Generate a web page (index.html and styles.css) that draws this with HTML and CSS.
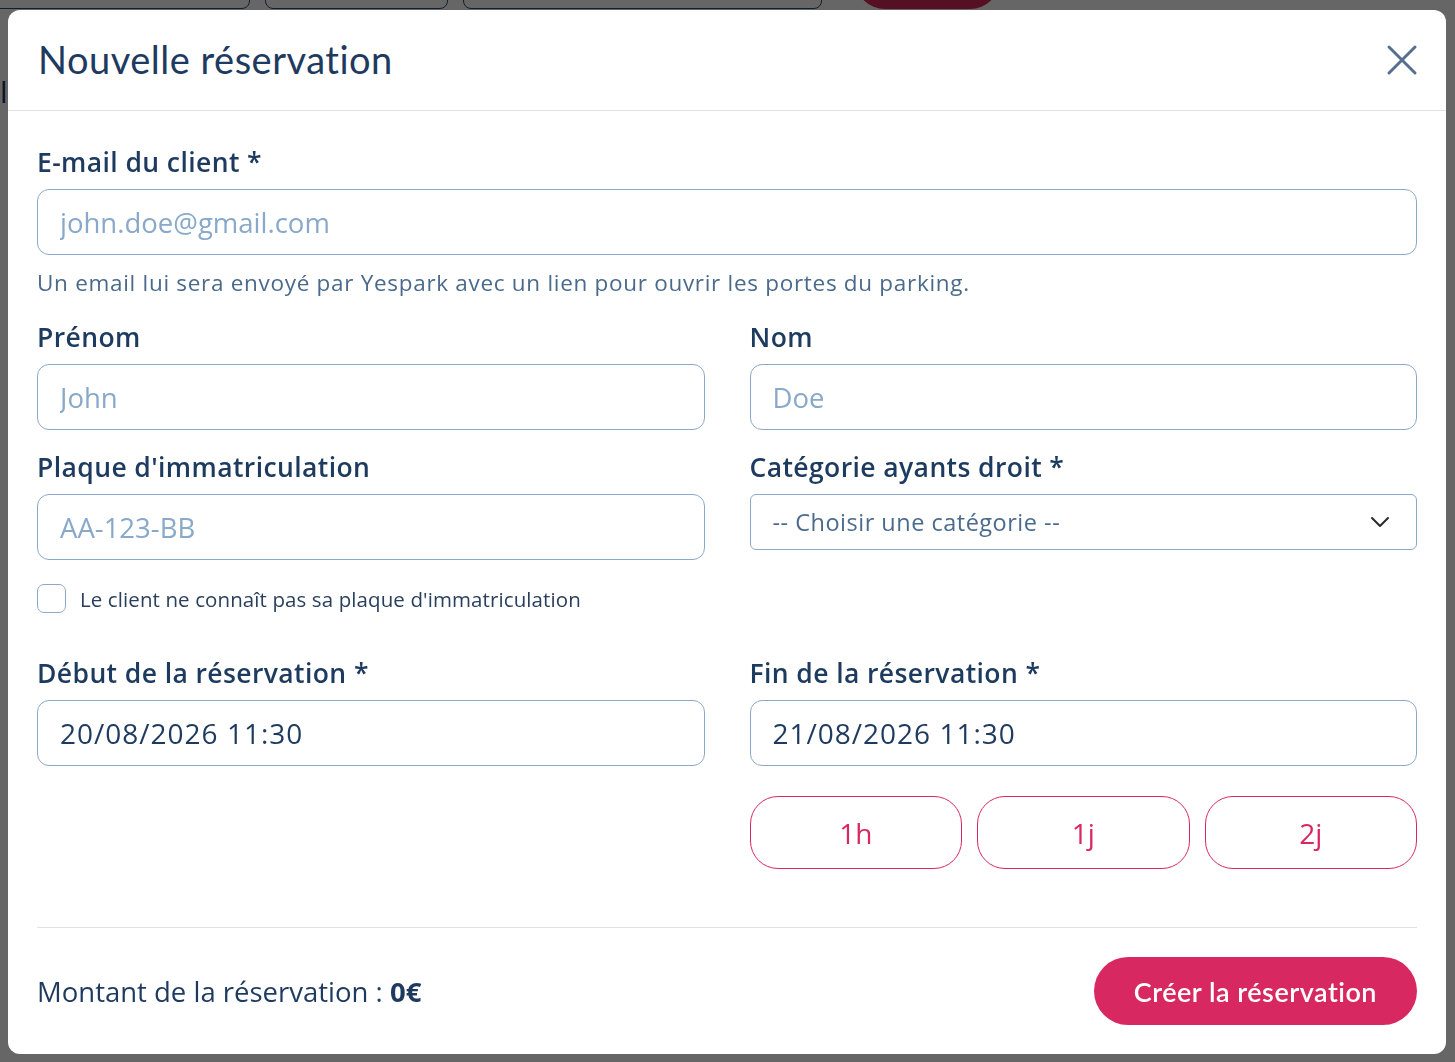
FILE: index.html
```html
<!DOCTYPE html>
<html lang="fr">
  <head>
    <meta charset="UTF-8">
    <title>Nouvelle réservation</title>
    <link rel="stylesheet" href="styles.css">
  </head>
  <body>
    <!-- page behind the dialog -->
    <div class="page">
      <div class="page-cards">
        <div class="page-card card-a"></div>
        <div class="page-card card-b"></div>
        <div class="page-card card-c"></div>
        <div class="page-btn"></div>
      </div>
      <div class="page-text">l</div>
    </div>

    <div class="overlay">
      <div class="modal">
        <div class="modal-header">
          <h2 class="modal-title">Nouvelle réservation</h2>
          <button class="close" type="button" aria-label="Fermer">
            <svg width="32" height="32" viewBox="0 0 32 32" fill="none" stroke="#55708f" stroke-width="3" stroke-linecap="round">
              <path d="M3 3 L29 29 M29 3 L3 29"/>
            </svg>
          </button>
        </div>

        <form class="modal-body" onsubmit="return false;">
          <div class="field">
            <label class="field-label" for="email">E-mail du client *</label>
            <input type="text" id="email" class="input" placeholder="john.doe@gmail.com">
            <p class="help">Un email lui sera envoyé par Yespark avec un lien pour ouvrir les portes du parking.</p>
          </div>

          <div class="row row-names">
            <div class="field">
              <label class="field-label" for="firstname">Prénom</label>
              <input type="text" id="firstname" class="input" placeholder="John">
            </div>
            <div class="field">
              <label class="field-label" for="lastname">Nom</label>
              <input type="text" id="lastname" class="input" placeholder="Doe">
            </div>
          </div>

          <div class="row row-plate">
            <div class="field">
              <label class="field-label" for="plate">Plaque d'immatriculation</label>
              <input type="text" id="plate" class="input" placeholder="AA-123-BB">
              <label class="check">
                <input type="checkbox">
                <span class="box"></span>
                <span class="check-text">Le client ne connaît pas sa plaque d'immatriculation</span>
              </label>
            </div>
            <div class="field">
              <label class="field-label" for="category">Catégorie ayants droit *</label>
              <div class="select" id="category">
                <span>-- Choisir une catégorie --</span>
                <svg width="20" height="12" viewBox="0 0 20 12" fill="none" stroke="#2b2b2b" stroke-width="2" stroke-linecap="round" stroke-linejoin="round">
                  <path d="M2 2 L10 10 L18 2"/>
                </svg>
              </div>
            </div>
          </div>

          <div class="row row-dates">
            <div class="field">
              <label class="field-label" for="start">Début de la réservation *</label>
              <input type="text" id="start" class="input filled" value="20/08/2026 11:30">
            </div>
            <div class="field">
              <label class="field-label" for="end">Fin de la réservation *</label>
              <input type="text" id="end" class="input filled" value="21/08/2026 11:30">
              <div class="quick">
                <button type="button" class="quick-btn">1h</button>
                <button type="button" class="quick-btn">1j</button>
                <button type="button" class="quick-btn">2j</button>
              </div>
            </div>
          </div>

          <div class="modal-footer">
            <p class="amount">Montant de la réservation : <strong>0€</strong></p>
            <button type="button" class="submit">Créer la réservation</button>
          </div>
        </form>
      </div>
    </div>
  </body>
</html>
```

FILE: styles.css
```css
* {
  box-sizing: border-box;
}

body {
  margin: 0;
  background-color: #ffffff;
  font-family: 'Open Sans', 'Noto Sans', sans-serif;
  color: #1d3a5f;
}

/* Page sitting under the overlay */
.page {
  height: 100vh;
  overflow: hidden;
}

.page-cards {
  display: flex;
  align-items: flex-end;
  height: 9px;
  margin-left: -40px;
}

.page-card {
  height: 60px;
  border: 1px solid #2c4d78;
  border-radius: 8px;
  background: #ffffff;
  flex: none;
}

.card-a { width: 290px; margin-right: 15px; }
.card-b { width: 183px; margin-right: 15px; }
.card-c { width: 359px; margin-right: 33px; }

.page-btn {
  width: 145px;
  height: 60px;
  border-radius: 40px;
  background: #d8285f;
}

.page-text {
  margin-top: 62px;
  font-size: 30px;
  color: #1d3a5f;
}

/* Overlay and dialog */
.overlay {
  position: fixed;
  inset: 0;
  background-color: rgba(0, 0, 0, 0.6);
  padding: 10px 9px 8px 8px;
}

.modal {
  background: #ffffff;
  border-radius: 12px;
  height: 100%;
  display: flex;
  flex-direction: column;
}

.modal-header {
  height: 101px;
  padding: 0 28px 0 30px;
  border-bottom: 1px solid #dfe1e8;
  display: flex;
  align-items: center;
  justify-content: space-between;
}

.modal-title {
  margin: 0 0 2px 0;
  font-family: 'Lato', sans-serif;
  font-weight: 400;
  font-size: 38px;
  color: #1e3a5f;
  letter-spacing: 0.5px;
}

.close {
  border: none;
  background: none;
  padding: 0;
  cursor: pointer;
  display: flex;
}

.modal-body {
  padding: 34px 29px 0 29px;
  display: flex;
  flex-direction: column;
  flex: 1;
}

/* Fields */
.field {
  display: flex;
  flex-direction: column;
}

.field-label {
  font-size: 26.5px;
  font-weight: 600;
  line-height: 34px;
  letter-spacing: 0.4px;
  margin-bottom: 10px;
  color: #1d3a5f;
}

.input {
  height: 66px;
  width: 100%;
  border: 1px solid #8ca8c7;
  border-radius: 12px;
  padding: 0 22px;
  font-family: inherit;
  font-size: 27.5px;
  color: #1e3a5f;
  outline: none;
}

.input::placeholder {
  color: #88a9ca;
}

.input.filled {
  font-size: 28px;
  letter-spacing: 1px;
}

.help {
  margin: 13px 0 0 0;
  font-size: 22.5px;
  line-height: 30px;
  letter-spacing: 0.7px;
  color: #4a6a8c;
}

.row {
  display: grid;
  grid-template-columns: 1fr 1fr;
  column-gap: 45px;
}

.row-names {
  margin-top: 22px;
}

.row-plate {
  margin-top: 20px;
}

.row-dates {
  margin-top: 43px;
}

/* Select */
.select {
  height: 56px;
  border: 1px solid #8ca8c7;
  border-radius: 6px;
  padding: 0 26px 0 22px;
  display: flex;
  align-items: center;
  justify-content: space-between;
  font-size: 23.5px;
  letter-spacing: 0.5px;
  color: #4b6b8e;
}

/* Checkbox */
.check {
  margin-top: 24px;
  display: flex;
  align-items: center;
  cursor: pointer;
}

.check input {
  display: none;
}

.box {
  width: 29px;
  height: 29px;
  border: 1px solid #8ca8c7;
  border-radius: 7px;
  margin-right: 14px;
  flex: none;
}

.check-text {
  font-size: 20.5px;
  letter-spacing: 0.1px;
  color: #2a3f5c;
}

/* Quick duration buttons */
.quick {
  display: flex;
  gap: 15px;
  margin-top: 30px;
}

.quick-btn {
  flex: 1;
  height: 73px;
  border: 1px solid #d8285f;
  border-radius: 28px;
  background: #ffffff;
  color: #d8285f;
  font-family: inherit;
  font-size: 28px;
  cursor: pointer;
}

/* Footer */
.modal-footer {
  margin-top: 58px;
  border-top: 1px solid #dfe1e8;
  padding-top: 29px;
  display: flex;
  align-items: center;
  justify-content: space-between;
}

.amount {
  margin: 0;
  font-size: 27.5px;
  color: #1e3a5f;
}

.amount strong {
  font-weight: 700;
}

.submit {
  height: 68px;
  padding: 0 40px;
  border: none;
  border-radius: 34px;
  background-color: #d82862;
  color: #ffffff;
  font-family: 'Lato', sans-serif;
  font-size: 27px;
  font-weight: 600;
  letter-spacing: 0.5px;
  cursor: pointer;
}
```
